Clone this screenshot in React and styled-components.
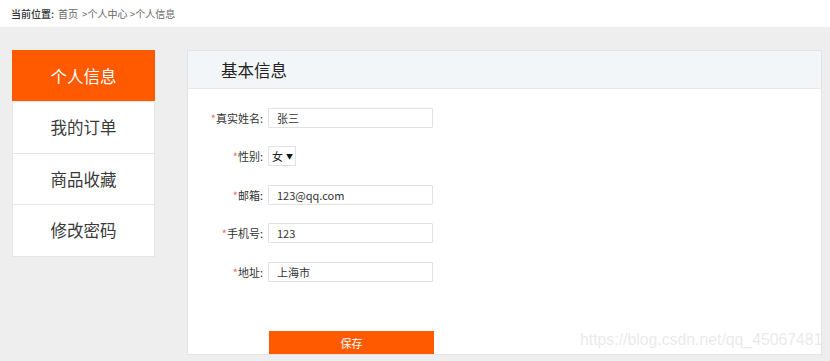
import React from "react";
import styled, { createGlobalStyle } from "styled-components";

const Global = createGlobalStyle`
  html, body { margin: 0; padding: 0; background: #eeeeee; }
  body { font-family: "Noto Sans CJK SC", "Noto Sans", sans-serif; color: #333; }
  * { box-sizing: border-box; }
`;

const Page = styled.div`
  position: relative;
  width: 830px;
  height: 361px;
  overflow: hidden;
  background: #eeeeee;
`;

const TopBar = styled.div`
  height: 27px;
  background: #fff;
  display: flex;
  align-items: center;
  padding-left: 11px;
  font-size: 10px;
  color: #666;
`;

const Crumb = styled.span`
  color: ${(p) => (p.$strong ? "#333" : "#666")};
  font-weight: ${(p) => (p.$strong ? 500 : 400)};
  margin-right: ${(p) => (p.$gap ? "4px" : "0")};
`;

const Body = styled.div`
  display: flex;
  align-items: flex-start;
  gap: 32px;
  padding: 23px 8px 0 12px;
`;

const Sidebar = styled.nav`
  width: 143px;
  display: flex;
  flex-direction: column;
  background: #fff;
  border: 1px solid #e6e6e6;
  border-top: none;
`;

const NavItem = styled.div`
  height: ${(p) => (p.$first ? "51px" : "51.5px")};
  display: flex;
  align-items: center;
  justify-content: center;
  font-size: 16.5px;
  color: ${(p) => (p.$active ? "#fff" : "#3a3a3a")};
  background: ${(p) => (p.$active ? "#ff5a00" : "#fff")};
  border-top: ${(p) => (p.$first ? "none" : "1px solid #e6e6e6")};
  margin: ${(p) => (p.$active ? "0 -1px" : "0")};
`;

const Panel = styled.section`
  flex: 1;
  height: 305px;
  background: #fff;
  border: 1px solid #e3e3e3;
  display: flex;
  flex-direction: column;
`;

const PanelHeader = styled.div`
  height: 40px;
  background: #f3f6f9;
  border-bottom: 1px solid #e6e9ec;
  display: flex;
  align-items: center;
  padding-left: 33px;
  font-size: 16.5px;
  color: #222;
`;

const Form = styled.div`
  display: flex;
  flex-direction: column;
  gap: 18.5px;
  padding-top: 18.5px;
`;

const Row = styled.div`
  display: flex;
  align-items: center;
  height: 20px;
`;

const Label = styled.label`
  width: 75px;
  text-align: right;
  font-size: 11px;
  color: #333;
  margin-right: 5px;
  white-space: nowrap;
`;

const Star = styled.span`
  color: #f26d6d;
`;

const Input = styled.div`
  width: 165px;
  height: 20px;
  border: 1px solid #e2e2e2;
  border-radius: 1px;
  padding-left: 8px;
  display: flex;
  align-items: center;
  font-size: 11px;
  color: #333;
`;

const Select = styled.div`
  width: 28px;
  height: 20px;
  border: 1px solid #e2e2e2;
  display: flex;
  align-items: center;
  padding-left: 3px;
  gap: 3px;
  font-size: 11px;
  color: #222;
`;

const Arrow = styled.span`
  font-size: 7px;
  color: #111;
`;

const Actions = styled.div`
  padding: 47px 0 0 81px;
`;

const SaveButton = styled.button`
  width: 165px;
  height: 23px;
  border: none;
  background: #ff5a00;
  color: #fff;
  font-family: inherit;
  font-size: 11px;
  padding: 0;
  cursor: pointer;
`;

const Watermark = styled.div`
  position: absolute;
  left: 580px;
  top: 331px;
  font-family: "Liberation Sans", Arial, sans-serif;
  font-size: 15.8px;
  color: rgba(200, 200, 200, 0.4);
  pointer-events: none;
  white-space: nowrap;
`;

const fields = [
  { label: "真实姓名", value: "张三" },
  { label: "性别", select: "女" },
  { label: "邮箱", value: "123@qq.com" },
  { label: "手机号", value: "123" },
  { label: "地址", value: "上海市" },
];

const navs = ["个人信息", "我的订单", "商品收藏", "修改密码"];

export default function App() {
  return (
    <Page>
      <Global />
      <TopBar>
        <Crumb $strong $gap>当前位置:</Crumb>
        <Crumb $gap>首页</Crumb>
        <Crumb>&gt;个人中心 &gt;个人信息</Crumb>
      </TopBar>
      <Body>
        <Sidebar>
          {navs.map((n, i) => (
            <NavItem key={n} $active={i === 0} $first={i === 0}>
              {n}
            </NavItem>
          ))}
        </Sidebar>
        <Panel>
          <PanelHeader>基本信息</PanelHeader>
          <Form>
            {fields.map((f) => (
              <Row key={f.label}>
                <Label>
                  <Star>*</Star>
                  {f.label}:
                </Label>
                {f.select ? (
                  <Select>
                    {f.select}
                    <Arrow>▼</Arrow>
                  </Select>
                ) : (
                  <Input>{f.value}</Input>
                )}
              </Row>
            ))}
          </Form>
          <Actions>
            <SaveButton>保存</SaveButton>
          </Actions>
        </Panel>
      </Body>
      <Watermark>https://blog.csdn.net/qq_45067481</Watermark>
    </Page>
  );
}
